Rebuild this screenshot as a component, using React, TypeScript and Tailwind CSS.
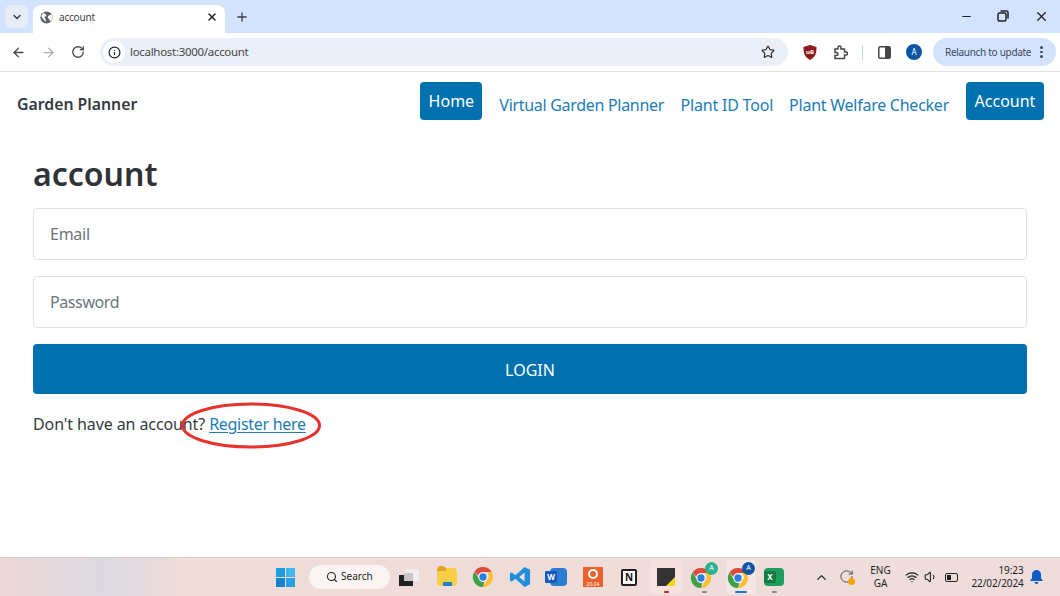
import { ArrowLeft, ArrowRight, ChevronDown, ChevronUp, Info, Minus, Plus, RotateCw, Search, Star, Volume1, Wifi, X } from "lucide-react";

const font = "font-['Noto_Sans',sans-serif]";

function ChromeIcon({ size = 22 }: { size?: number }) {
  return (
    <svg width={size} height={size} viewBox="0 0 48 48">
      <path d="M24 2a22 22 0 0 1 19 11H24a11 11 0 0 0-10.500 8L5.800 11.500A22 22 0 0 1 24 2z" fill="#dd4b3e" />
      <path d="M43 13a22 22 0 0 1-19 33l9.500-16.500a11 11 0 0 0-1-16.500z" fill="#fbc02d" />
      <path d="M24 46A22 22 0 0 1 5.800 11.500L15 28a11 11 0 0 0 12 7z" fill="#43a047" />
      <circle cx="24" cy="24" r="10" fill="#fff" />
      <circle cx="24" cy="24" r="8" fill="#2a7de1" />
    </svg>
  );
}

function Avatar({ color }: { color: string }) {
  return (
    <div className="relative h-[24px] w-[28px]">
      <div className="absolute bottom-0 left-0">
        <ChromeIcon />
      </div>
      <div
        className="absolute right-0 top-[-3px] flex h-[13px] w-[13px] items-center justify-center rounded-full text-[7px] text-white"
        style={{ backgroundColor: color }}
      >
        A
      </div>
    </div>
  );
}

function TabBar() {
  return (
    <div className="flex h-[33px] bg-[#d3e3fd] text-[#3c4043]">
      <div className="ml-[5px] mt-[5px] flex h-[23px] w-[23px] items-center justify-center rounded-md bg-[#e6edf9]">
        <ChevronDown size={12} strokeWidth={3} />
      </div>
      <div className="ml-[5px] mt-[5px] flex h-[28px] w-[192px] items-center rounded-t-lg bg-white pb-[4px] pl-[7px] pr-[7px]">
        <svg width="13" height="13" viewBox="0 0 16 16" className="mr-[6px] shrink-0">
          <circle cx="8" cy="8" r="7.500" fill="#5f6368" />
          <path d="M4 2.500l3 1.500 1 2-3 1.500 2 2.500v3.500L3 9 1.500 6zM10 6l4-2 1.500 4-1 3-2 2-1-3-2-1.500z" fill="#fff" />
        </svg>
        <span className="flex-1 text-[10px] tracking-[-0.2px]">account</span>
        <X size={12} strokeWidth={3} className="text-[#202124]" />
      </div>
      <div className="ml-[9px] mt-[9px] flex h-[16px] w-[16px] items-center justify-center">
        <Plus size={14} strokeWidth={2.200} />
      </div>
      <div className="ml-auto flex items-center gap-[24.500px] pb-[1px] pr-[11.500px] text-[#202124]">
        <Minus size={13} strokeWidth={2} />
        <svg width="12" height="12" viewBox="0 0 12 12" fill="none" stroke="currentColor" strokeWidth="1.500">
          <rect x="1" y="3" width="8" height="8" rx="1.500" />
          <path d="M3.500 1h6A1.500 1.500 0 0 1 11 2.500v6" />
        </svg>
        <X size={15} strokeWidth={2} />
      </div>
    </div>
  );
}

function Toolbar() {
  return (
    <div className="flex h-[39px] items-center border-b border-[#dfe1e5] bg-white text-[#474747]">
      <ArrowLeft size={15} strokeWidth={2.200} className="ml-[11px]" />
      <ArrowRight size={15} strokeWidth={2} className="ml-[15px] text-[#a8abb0]" />
      <RotateCw size={14} strokeWidth={2.200} className="ml-[15px]" />
      <div className="ml-[15px] flex h-[28px] w-[688px] items-center rounded-full bg-[#ebeff7] pl-[3px] pr-[13px]">
        <div className="flex h-[22px] w-[22px] items-center justify-center rounded-full bg-white">
          <Info size={13} strokeWidth={2.200} className="text-[#202124]" />
        </div>
        <span className="ml-[5px] flex-1 text-[11.500px] tracking-[-0.3px] text-[#474747]">localhost:3000/account</span>
        <Star size={14} strokeWidth={2} className="text-[#303134]" />
      </div>
      <svg width="14" height="15" viewBox="0 0 14 15" className="ml-[15px]">
        <path d="M7 0l6.500 2c0 6-1 10-6.500 13C1.500 12 .5 8 .5 2z" fill="#8e1a1a" />
        <text x="7" y="9" fontSize="6" fill="#fff" textAnchor="middle" fontWeight="700">uB</text>
      </svg>
      <svg width="15" height="15" viewBox="0 0 15 15" fill="none" stroke="#474747" strokeWidth="1.500" className="ml-[16px]">
        <path d="M2 4h3V2.500a1.500 1.500 0 0 1 3 0V4h3.500v3H13a1.500 1.500 0 0 1 0 3h-1.500v3.500H2V10.500h1.500a1.500 1.500 0 0 0 0-3H2z" />
      </svg>
      <div className="ml-[14px] h-[15px] w-px bg-[#c7d8f5]" />
      <svg width="13" height="13" viewBox="0 0 13 13" className="ml-[15px]">
        <rect x=".75" y=".75" width="11.500" height="11.500" rx="1.500" fill="#fff" stroke="#474747" strokeWidth="1.500" />
        <rect x="7" y="1" width="5" height="11" fill="#474747" />
      </svg>
      <div className="ml-[15px] flex h-[16px] w-[16px] items-center justify-center rounded-full bg-[#0b57a4] text-[8px] text-white">
        A
      </div>
      <div className="ml-[11px] flex h-[28px] w-[123px] items-center rounded-full bg-[#d3e3fd] pl-[12px] text-[10px] tracking-[-0.3px] text-[#3c4a5e]">
        Relaunch to update
        <div className="ml-[9px] flex flex-col gap-[2px]">
          <span className="h-[2.500px] w-[2.500px] rounded-full bg-[#3c4a5e]" />
          <span className="h-[2.500px] w-[2.500px] rounded-full bg-[#3c4a5e]" />
          <span className="h-[2.500px] w-[2.500px] rounded-full bg-[#3c4a5e]" />
        </div>
      </div>
    </div>
  );
}

function NavBar() {
  return (
    <nav className="flex h-[66px] items-center pl-[17px] pr-[16px] text-[16px]">
      <span className="text-[15.800px] font-semibold text-[#343a40]">Garden Planner</span>
      <div className="ml-auto flex items-center">
        <a className="mb-[8px] flex h-[38px] w-[62px] items-center justify-center rounded bg-[#0071ae] text-white">Home</a>
        <a className="ml-[17px] tracking-[-0.3px] text-[#1c7cb5]">Virtual Garden Planner</a>
        <a className="ml-[16.500px] tracking-[-0.2px] text-[#1c7cb5]">Plant ID Tool</a>
        <a className="ml-[16px] tracking-[-0.25px] text-[#1c7cb5]">Plant Welfare Checker</a>
        <a className="mb-[8px] ml-[17px] flex h-[38px] w-[78px] items-center justify-center rounded bg-[#0071ae] text-white">Account</a>
      </div>
    </nav>
  );
}

function AccountForm() {
  return (
    <main className="relative px-[33px] pt-[17px] text-[#343a40]">
      <h1 className="text-[32px] font-semibold leading-[38px] text-[#2f3337]">account</h1>
      <div className="mt-[15px] flex h-[51.500px] items-center rounded border border-[#dee2e6] pl-[16px] text-[16px] tracking-[-0.25px] text-[#6c757d]">Email</div>
      <div className="mt-[16.500px] flex h-[51.500px] items-center rounded border border-[#dee2e6] pl-[16px] text-[16px] tracking-[-0.4px] text-[#6c757d]">Password</div>
      <button className="mt-[16.500px] flex h-[50px] w-full items-center justify-center rounded bg-[#0071ae] pt-[1px] text-[16px] text-white">LOGIN</button>
      <p className="mt-[18px] text-[16px] leading-[24px] tracking-[-0.1px]">
        Don't have an account? <a className="tracking-[-0.3px] text-[#1c7cb5] underline underline-offset-2">Register here</a>
      </p>
      <svg width="142" height="48" viewBox="0 0 142 48" className="absolute left-[180px] top-[264px]" fill="none">
        <ellipse cx="71" cy="23.500" rx="68.500" ry="21.500" stroke="#e8322c" strokeWidth="3" />
      </svg>
    </main>
  );
}

function Taskbar() {
  return (
    <div className="absolute bottom-0 left-0 right-0 flex h-[39px] items-center border-t border-[#d8cfcf] bg-[linear-gradient(90deg,#ecd7d6_0%,#dcd9e2_10%,#f0dcd8_18%,#eedddb_100%)] text-[#1f1f1f]">
      <div className="ml-[276px] grid h-[19px] w-[19px] grid-cols-2 gap-px">
        <span className="bg-[#1b9de2]" />
        <span className="bg-[#42b6ee]" />
        <span className="bg-[#1583cf]" />
        <span className="bg-[#2a9fe3]" />
      </div>
      <div className="ml-[14px] flex h-[24px] w-[81px] items-center rounded-full bg-[#faf4f2] pb-[1px] pl-[17px] text-[10px]">
        <Search size={12} strokeWidth={2.200} />
        <span className="ml-[3px]">Search</span>
      </div>
      <div className="relative ml-[9px] h-[17px] w-[20px]">
        <div className="absolute right-0 top-0 h-[12px] w-[14px] bg-[#f2eeee]" />
        <div className="absolute bottom-0 left-0 h-[11px] w-[14px] bg-[#222]" />
        <div className="absolute left-[5px] top-[4px] h-[8px] w-[9px] bg-[#c8c6c6]" />
      </div>
      <div className="relative ml-[18px] h-[18px] w-[20px] rounded-sm bg-[#f9cd46]">
        <div className="absolute left-0 top-[-2px] h-[5px] w-[9px] rounded-t-sm bg-[#e0a526]" />
        <div className="absolute bottom-0 left-[6px] h-[4px] w-[9px] bg-[#1f83c9]" />
      </div>
      <div className="ml-[15px]"><ChromeIcon /></div>
      <svg width="22" height="22" viewBox="0 0 24 24" className="ml-[15px]">
        <path d="M17 1l6 3v16l-6 3L7 14l-4 3-2-1V8l2-1 4 3zM17 7l-6 5 6 5z" fill="#1f8fdc" />
      </svg>
      <div className="relative ml-[14px] h-[18px] w-[22px]">
        <div className="absolute right-0 top-0 h-[18px] w-[17px] rounded-sm bg-[#2b7cd3]" />
        <div className="absolute left-0 top-[3px] flex h-[12px] w-[12px] items-center justify-center rounded-[1px] bg-[#185abd] text-[8px] font-bold text-white">W</div>
      </div>
      <div className="ml-[16px] flex h-[20px] w-[20px] flex-col items-center justify-between bg-[#e9622e] pt-[2px] text-[5px] leading-[6px] text-white">
        <span className="h-[10px] w-[10px] rounded-full border-2 border-white" />
        <span>20.04</span>
      </div>
      <div className="ml-[18px] flex h-[17px] w-[16px] items-center justify-center rounded-[2px] border-2 border-[#222] bg-white text-[10px] font-bold leading-none text-[#111]">N</div>
      <div className="relative ml-[13px] flex h-[34px] w-[32px] items-center justify-center rounded bg-[#f7e2e0]">
        <div className="relative h-[18px] w-[18px] overflow-hidden bg-[#333]">
          <div className="absolute bottom-0 right-0 h-[9px] w-[9px] bg-[#f5d90a] [clip-path:polygon(100%_0,100%_100%,0_100%)]" />
        </div>
        <div className="absolute bottom-[1px] h-[2px] w-[5px] rounded bg-[#d92020]" />
      </div>
      <div className="relative ml-[6px] flex h-[34px] w-[32px] items-center justify-center">
        <Avatar color="#2fb08f" />
        <div className="absolute bottom-[1px] h-[2px] w-[5px] rounded bg-[#8a8a8a]" />
      </div>
      <div className="relative ml-[6px] flex h-[34px] w-[30px] items-center justify-center rounded bg-[#f3e6e4]">
        <Avatar color="#0b57a4" />
        <div className="absolute bottom-[1px] h-[2px] w-[12px] rounded bg-[#1a78d0]" />
      </div>
      <div className="relative ml-[7px] flex h-[34px] w-[22px] items-center justify-center">
        <div className="relative h-[18px] w-[20px] rounded-sm bg-[#1f9d5c]">
          <div className="absolute left-0 top-[3px] flex h-[12px] w-[12px] items-center justify-center rounded-[1px] bg-[#107c41] text-[8px] font-bold text-white">X</div>
        </div>
        <div className="absolute bottom-[1px] h-[2px] w-[5px] rounded bg-[#8a8a8a]" />
      </div>
      <ChevronUp size={15} strokeWidth={2} className="ml-[29px]" />
      <div className="relative ml-[9.500px] h-[16px] w-[16px]">
        <RotateCw size={15} strokeWidth={1.500} className="text-[#444]" />
        <span className="absolute bottom-0 right-0 h-[7px] w-[7px] rounded-full bg-[#f5a50a]" />
      </div>
      <div className="ml-[15px] w-[22px] text-center text-[10px] leading-[13px]">ENG<br />GA</div>
      <Wifi size={14} strokeWidth={2} className="ml-[13px]" />
      <Volume1 size={14} strokeWidth={1.800} className="ml-[5px]" />
      <div className="relative ml-[7.500px] flex h-[9px] w-[13px] rounded-[2px] border border-[#222] p-px">
        <span className="h-full w-[4px] bg-[#222]" />
      </div>
      <div className="ml-[13.500px] w-[52px] whitespace-nowrap text-right text-[10px] leading-[13px] tracking-[-0.1px]">19:23<br />22/02/2024</div>
      <svg width="13" height="14" viewBox="0 0 13 14" className="ml-[6px]">
        <path d="M6.500 0a4.500 4.500 0 0 1 4.500 4.500V8l2 3H0l2-3V4.500A4.500 4.500 0 0 1 6.500 0zM4.500 12h4a2 2 0 0 1-4 0z" fill="#0c5dc4" />
      </svg>
    </div>
  );
}

export default function App() {
  return (
    <div className={`relative h-[596px] w-[1060px] overflow-hidden bg-white ${font}`}>
      <TabBar />
      <Toolbar />
      <NavBar />
      <AccountForm />
      <Taskbar />
    </div>
  );
}
